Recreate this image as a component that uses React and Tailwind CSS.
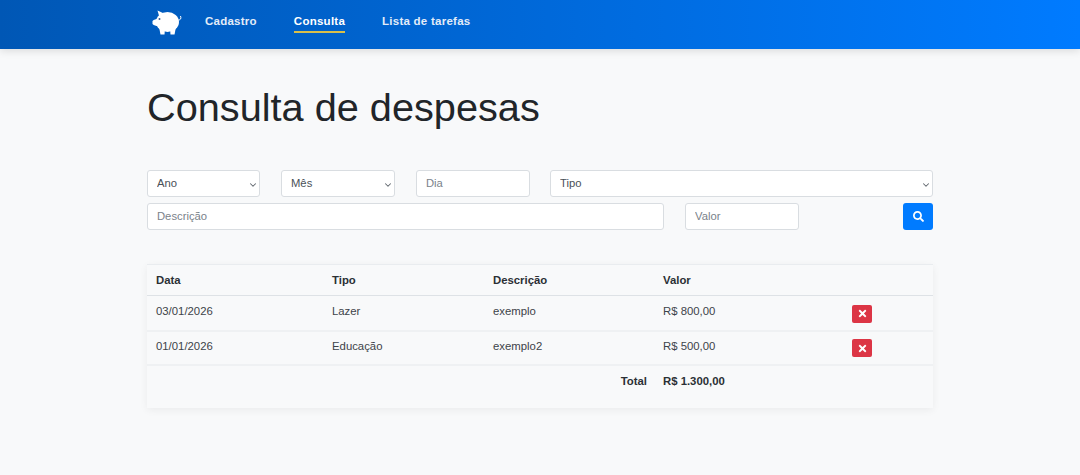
import React from "react";
import { FaSearch, FaTimes } from "react-icons/fa";
import { ChevronDown } from "lucide-react";

function Pig() {
  return (
    <svg width="30" height="27" viewBox="0 0 30 27" className="shrink-0" aria-hidden="true">
      <g fill="#fff">
        <ellipse cx="15.5" cy="13" rx="11.5" ry="10" />
        <path d="M5.5 1.5 L12 4.5 L8 10 Z" />
        <path d="M0.5 12 C2 10.5 4 10 6 10 L6 17 C4 17 2 16.5 0.5 15 Z" />
        <path d="M7 18 H13 L12.5 25.5 H8.5 Z" />
        <path d="M18 18 H24 L22.5 25.5 H18.5 Z" />
      </g>
      <path d="M26.5 11 C28.5 11 29.5 9.5 28.5 7" fill="none" stroke="#fff" strokeWidth="1" />
      <circle cx="7.5" cy="10" r="1" fill="#3c5f96" />
    </svg>
  );
}

function NavLink({ children, active }) {
  return (
    <a className={`block pb-[3px] border-b-2 text-[11.5px] leading-[14px] font-bold tracking-[0.25px] ${active ? "border-[#d9bf4b] text-white" : "border-transparent text-[#e3ecf8]"}`}>
      {children}
    </a>
  );
}

const field = "h-[27px] w-full rounded-[3px] border border-[#d9dde1] bg-white text-[11.25px] text-[#495057] outline-none";

function Select({ label, className = "" }) {
  return (
    <div className={`relative ${className}`}>
      <select className={`${field} appearance-none pl-[9px] pb-[1px]`} defaultValue="">
        <option value="">{label}</option>
      </select>
      <ChevronDown size={10} strokeWidth={2.5} className="pointer-events-none absolute right-[2px] top-[10px] text-[#5f666d]" />
    </div>
  );
}

function Input({ label, className = "" }) {
  return (
    <div className={className}>
      <input placeholder={label} className={`${field} px-[9px] pb-[1px] placeholder:text-[#7a828a]`} />
    </div>
  );
}

function DeleteBtn() {
  return (
    <button className="flex h-[18px] w-[20px] items-center justify-center rounded-[2px] bg-[#dc3545] text-white">
      <FaTimes size={11} />
    </button>
  );
}

const rows = [
  ["03/01/2026", "Lazer", "exemplo", "R$ 800,00", "h-[35px]", "pb-[4px]"],
  ["01/01/2026", "Educação", "exemplo2", "R$ 500,00", "h-[34px]", "pb-[3px]"],
];

export default function App() {
  return (
    <div className="min-h-[475px] bg-[#f8f9fa] text-[#212529] font-['Liberation_Sans',Arial,sans-serif]">
      <nav className="h-[49px] bg-gradient-to-r from-[#0057b5] to-[#007bff] shadow-[0_2px_8px_rgba(0,0,0,0.12)]">
        <div className="ml-[152px] flex h-[44px] items-center">
          <Pig />
          <div className="ml-[23px] flex items-center gap-[37px] pt-[2px]">
            <NavLink>Cadastro</NavLink>
            <NavLink active>Consulta</NavLink>
            <NavLink>Lista de tarefas</NavLink>
          </div>
        </div>
      </nav>

      <main className="mx-[147px]">
        <h1 className="mt-[34px] text-[39.7px] font-normal leading-[48px]">Consulta de despesas</h1>

        <form className="mt-[39px] flex flex-col gap-[6px]">
          <div className="flex">
            <Select label="Ano" className="w-[113px]" />
            <Select label="Mês" className="ml-[21px] w-[114px]" />
            <Input label="Dia" className="ml-[21px] w-[114px]" />
            <Select label="Tipo" className="ml-[20px] flex-1" />
          </div>
          <div className="flex">
            <Input label="Descrição" className="w-[517px]" />
            <Input label="Valor" className="ml-[21px] w-[114px]" />
            <button type="button" className="ml-auto flex h-[27px] w-[30px] items-center justify-center rounded-[3px] bg-[#007bff] text-white">
              <FaSearch size={11} />
            </button>
          </div>
        </form>

        <table className="mt-[34px] w-full table-fixed border-collapse text-[11.35px] leading-[16px] shadow-[0_2px_8px_rgba(0,0,0,0.06)]">
          <colgroup>
            <col className="w-[176px]" />
            <col className="w-[161px]" />
            <col className="w-[170px]" />
            <col className="w-[189px]" />
            <col />
          </colgroup>
          <thead>
            <tr className="h-[31px] border-y border-t-[#e9ecef] border-b-[#dee2e6] text-left font-bold text-[#2b3035]">
              <th className="px-[9px]">Data</th>
              <th className="px-[9px]">Tipo</th>
              <th className="px-[9px]">Descrição</th>
              <th className="px-[9px]">Valor</th>
              <th />
            </tr>
          </thead>
          <tbody>
            {rows.map((r) => (
              <tr key={r[0]} className={`${r[4]} border-b-2 border-[#eff1f3] text-[#3d4349]`}>
                <td className={`px-[9px] ${r[5]}`}>{r[0]}</td>
                <td className={`px-[9px] ${r[5]}`}>{r[1]}</td>
                <td className={`px-[9px] ${r[5]}`}>{r[2]}</td>
                <td className={`px-[9px] ${r[5]}`}>{r[3]}</td>
                <td className="px-[9px] pt-[1px]"><DeleteBtn /></td>
              </tr>
            ))}
            <tr className="h-[43px] font-bold text-[#2b3035]">
              <td colSpan={3} className="pl-[9px] pr-[7px] pb-[11px] text-right">Total</td>
              <td className="px-[9px] pb-[11px]">R$ 1.300,00</td>
              <td />
            </tr>
          </tbody>
        </table>
      </main>
    </div>
  );
}
